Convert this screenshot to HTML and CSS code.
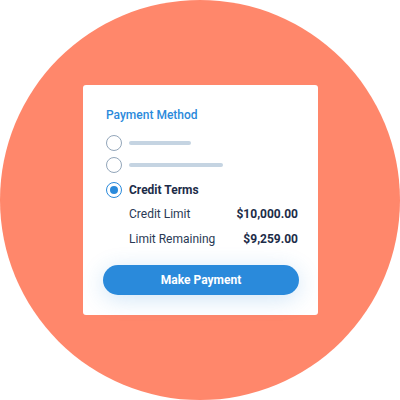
FILE: index.html
```html
<!DOCTYPE html>
<html>
<head>
<meta charset="utf-8">
<link rel="stylesheet" href="styles.css">
</head>
<body>
<div class="circle">
  <div class="card">
    <div class="title">Payment Method</div>
    <div class="option opt1">
      <span class="radio"></span>
      <span class="bar bar-short"></span>
    </div>
    <div class="option opt2">
      <span class="radio"></span>
      <span class="bar bar-long"></span>
    </div>
    <div class="option opt3">
      <span class="radio selected"></span>
      <span class="option-label">Credit Terms</span>
    </div>
    <div class="detail detail1">
      <span class="label">Credit Limit</span>
      <span class="value">$10,000.00</span>
    </div>
    <div class="detail detail2">
      <span class="label">Limit Remaining</span>
      <span class="value">$9,259.00</span>
    </div>
    <button class="pay">Make Payment</button>
  </div>
</div>
</body>
</html>
```

FILE: styles.css
```css
html, body {
  margin: 0;
  padding: 0;
  background: #ffffff;
}
body {
  width: 400px;
  height: 400px;
  font-family: Roboto, "Liberation Sans", sans-serif;
}
.circle {
  width: 400px;
  height: 400px;
  border-radius: 50%;
  background: #ff876b;
  display: flex;
  align-items: center;
  justify-content: center;
}
.card {
  box-sizing: border-box;
  width: 235px;
  height: 230px;
  margin-left: 1px;
  background: #ffffff;
  border-radius: 3px;
  padding: 23px 20px 0 23px;
  display: flex;
  flex-direction: column;
}
.title {
  font-size: 12px;
  line-height: 14px;
  font-weight: 500;
  color: #2b8adb;
}
.option {
  display: flex;
  align-items: center;
  height: 16px;
}
.opt1 { margin-top: 13px; }
.opt2 { margin-top: 6px; }
.opt3 { margin-top: 9px; }
.radio {
  box-sizing: border-box;
  width: 16px;
  height: 16px;
  border-radius: 50%;
  border: 1.6px solid #93a6ba;
  margin-right: 7px;
  display: flex;
  align-items: center;
  justify-content: center;
  flex: none;
}
.radio.selected {
  border-color: #2a8adb;
}
.radio.selected::after {
  content: "";
  width: 8px;
  height: 8px;
  border-radius: 50%;
  background: #2a8adb;
}
.bar {
  height: 4px;
  border-radius: 2px;
  background: #c5d4e2;
}
.bar-short { width: 62px; }
.bar-long { width: 94px; }
.option-label {
  font-size: 12px;
  font-weight: 700;
  color: #1c2c48;
}
.detail {
  display: flex;
  justify-content: space-between;
  align-items: center;
  height: 16px;
  padding-left: 23px;
  font-size: 12px;
}
.detail1 { margin-top: 8px; }
.detail2 { margin-top: 9px; }
.label {
  color: #2a3a55;
}
.value {
  font-weight: 700;
  color: #1c2c48;
}
.pay {
  margin: 18px -1px 0 -3px;
  height: 30px;
  border: none;
  border-radius: 15px;
  background: #2a8adb;
  color: #ffffff;
  font-family: Roboto, "Liberation Sans", sans-serif;
  font-size: 12px;
  font-weight: 700;
  box-shadow: 0 4px 22px rgba(42, 138, 219, 0.22);
  padding: 0;
}
```
